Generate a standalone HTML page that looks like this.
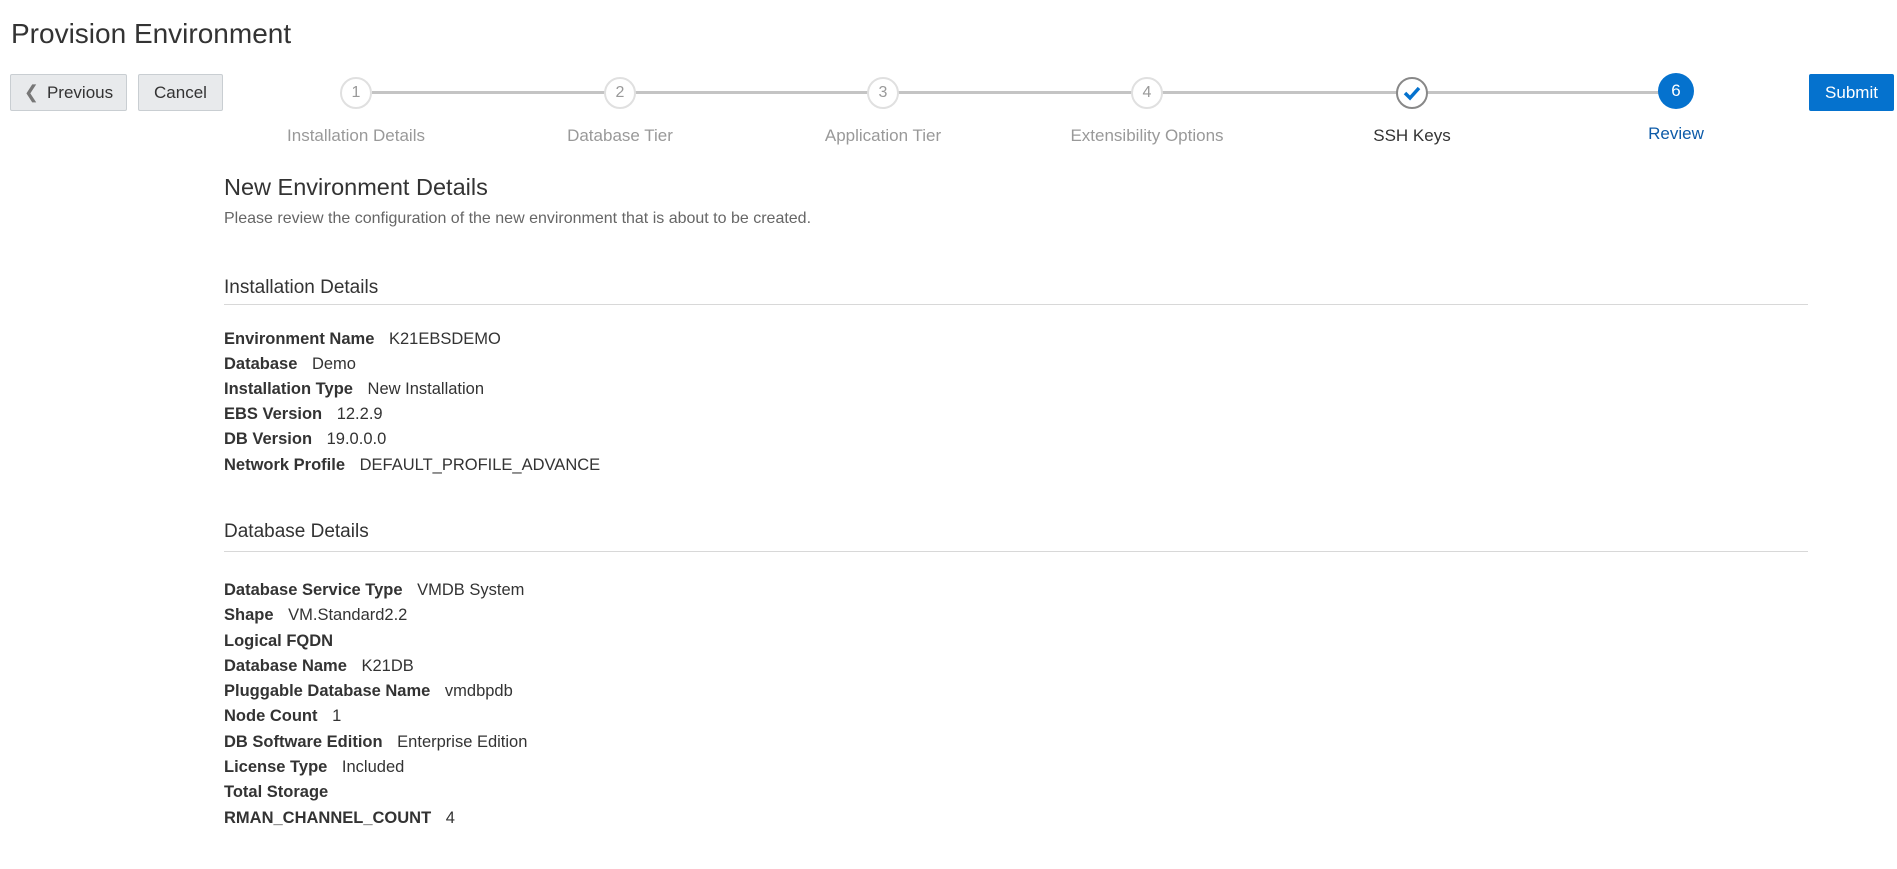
<!DOCTYPE html>
<html><head><meta charset="utf-8"><style>
body{margin:0;width:1897px;height:869px;background:#fff;font-family:"Liberation Sans",sans-serif;color:#333;position:relative;overflow:hidden}
.a{position:absolute;white-space:nowrap}
.btn{position:absolute;top:74px;height:37px;box-sizing:border-box;border:1px solid #c9ced2;background:#e8eaec;border-radius:2px;font-size:17px;color:#333;line-height:35px;text-align:center}
.line{position:absolute;top:91px;height:3px;background:#c4c4c4}
.c{position:absolute;width:32px;height:32px;box-sizing:border-box;border-radius:50%;border:2px solid #e0e0e0;background:#fff;top:77px;text-align:center;line-height:28px;font-size:16px;color:#999}
.lbl{position:absolute;top:126px;font-size:17px;color:#999;transform:translateX(-50%)}
.h{font-size:19px;color:#333}
.hr{position:absolute;left:224px;width:1584px;height:1px;background:#d8d8d8}
.r{position:absolute;left:224px;font-size:16.5px;color:#333}
.r b{margin-right:10px}
</style></head><body>
<div class="a" style="left:11px;top:18px;font-size:28px;color:#333">Provision Environment</div>
<div class="btn" style="left:10px;width:117px"><span style="color:#777;font-size:18px;margin-right:8px">&#10094;</span>Previous</div>
<div class="btn" style="left:138px;width:85px">Cancel</div>
<div class="line" style="left:372px;width:1290px"></div>
<div class="c" style="left:340px">1</div>
<div class="c" style="left:604px">2</div>
<div class="c" style="left:867px">3</div>
<div class="c" style="left:1131px">4</div>
<div class="c" style="left:1396px;border-color:#888"><svg width="28" height="28" viewBox="0 0 28 28"><path d="M7 14l5 5 9-10" stroke="#0572ce" stroke-width="3.5" fill="none"/></svg></div>
<div class="c" style="left:1658px;width:36px;height:36px;top:73px;border:none;background:#0572ce;color:#fff;line-height:36px;font-size:17px">6</div>
<div class="lbl" style="left:356px">Installation Details</div>
<div class="lbl" style="left:620px">Database Tier</div>
<div class="lbl" style="left:883px">Application Tier</div>
<div class="lbl" style="left:1147px">Extensibility Options</div>
<div class="lbl" style="left:1412px;color:#333">SSH Keys</div>
<div class="lbl" style="left:1676px;top:124px;color:#0d5ba8">Review</div>
<div class="btn" style="left:1809px;width:85px;background:#0572ce;border-color:#0572ce;color:#fff">Submit</div>
<div class="a" style="left:224px;top:174px;font-size:23.5px;color:#333">New Environment Details</div>
<div class="a" style="left:224px;top:210px;font-size:16px;color:#666">Please review the configuration of the new environment that is about to be created.</div>
<div class="a h" style="left:224px;top:277px">Installation Details</div>
<div class="hr" style="top:304px"></div>
<div class="r" style="top:330px"><b>Environment Name</b> K21EBSDEMO</div>
<div class="r" style="top:355px"><b>Database</b> Demo</div>
<div class="r" style="top:380px"><b>Installation Type</b> New Installation</div>
<div class="r" style="top:405px"><b>EBS Version</b> 12.2.9</div>
<div class="r" style="top:430px"><b>DB Version</b> 19.0.0.0</div>
<div class="r" style="top:456px"><b>Network Profile</b> DEFAULT_PROFILE_ADVANCE</div>
<div class="a h" style="left:224px;top:521px">Database Details</div>
<div class="hr" style="top:551px"></div>
<div class="r" style="top:581px"><b>Database Service Type</b> VMDB System</div>
<div class="r" style="top:606px"><b>Shape</b> VM.Standard2.2</div>
<div class="r" style="top:632px"><b>Logical FQDN</b></div>
<div class="r" style="top:657px"><b>Database Name</b> K21DB</div>
<div class="r" style="top:682px"><b>Pluggable Database Name</b> vmdbpdb</div>
<div class="r" style="top:707px"><b>Node Count</b> 1</div>
<div class="r" style="top:733px"><b>DB Software Edition</b> Enterprise Edition</div>
<div class="r" style="top:758px"><b>License Type</b> Included</div>
<div class="r" style="top:783px"><b>Total Storage</b></div>
<div class="r" style="top:809px"><b>RMAN_CHANNEL_COUNT</b> 4</div>
</body></html>
